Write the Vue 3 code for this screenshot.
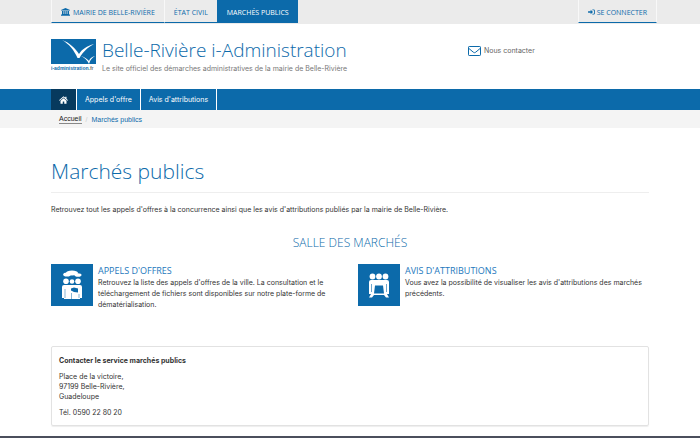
<script setup>
const services = [
  {
    title: "APPELS D'OFFRES",
    icon: 'offers',
    text: "Retrouvez la liste des appels d'offres de la ville. La consultation et le téléchargement de fichiers sont disponibles sur notre plate-forme de dématérialisation."
  },
  {
    title: "AVIS D'ATTRIBUTIONS",
    icon: 'awards',
    text: "Vous avez la possibilité de visualiser les avis d'attributions des marchés précédents."
  }
]
</script>

<template>
  <div class="page">
    <div class="topbar">
      <div class="container topbar-row">
        <nav class="tabs" aria-label="Sites">
          <a href="#" class="tab">
            <svg class="bank" viewBox="0 0 18 16" aria-hidden="true">
              <path d="M9 0 18 4v1H0V4zM2 6h3v6H2zM6.500 6h2v6h-2zM9.500 6h2v6h-2zM13 6h3v6h-3zM1 12h16v2H1zM0 14.500h18V16H0z" />
            </svg>
            MAIRIE DE BELLE-RIVIÈRE
          </a>
          <a href="#" class="tab">ÉTAT CIVIL</a>
          <a href="#" class="tab active" aria-current="page">MARCHÉS PUBLICS</a>
        </nav>
        <a href="#" class="tab login">
          <svg class="signin" viewBox="0 0 16 14" aria-hidden="true">
            <path d="M6 1.500 11.500 7 6 12.500V9H0V5h6zM10 1h3a3 3 0 0 1 3 3v6a3 3 0 0 1-3 3h-3v-2h3a1 1 0 0 0 1-1V4a1 1 0 0 0-1-1h-3z" />
          </svg>
          SE CONNECTER
        </a>
      </div>
    </div>

    <header class="container header">
      <a href="#" class="brand">
        <svg class="logo" viewBox="0 0 45 34" role="img" aria-label="i-administration.fr">
          <rect width="45" height="25" fill="#0c6aaa" />
          <path d="M11 1C19 4 24 9 28 15C31 10 36 7 43 5C36 9 32 13 28.500 19H26.500C23 11 18 5 11 1Z" fill="#fff" />
          <path d="M30 17C34 18 36 20 38 22C39 19 41 18 44 17C41 19 39 21 38 25C36 21 34 19 30 17Z" fill="#fff" />
          <text class="logo-text" x="0" y="31" fill="#0c6aaa">i-administration<tspan fill="#777">.fr</tspan></text>
        </svg>
        <span class="brand-text">
          <span class="site-name">Belle-Rivière i-Administration</span>
          <span class="slogan">Le site officiel des démarches administratives de la mairie de Belle-Rivière</span>
        </span>
      </a>
      <a href="#" class="contact">
        <svg class="mail" viewBox="0 0 13 10" aria-hidden="true">
          <rect x=".5" y=".5" width="12" height="9" rx=".7" />
          <path d="M.7 2.300 5.300 6.200Q6.500 7.200 7.700 6.200L12.300 2.300" />
        </svg>
        Nous contacter
      </a>
    </header>

    <nav class="mainnav" aria-label="Navigation principale">
      <div class="container nav-row">
        <a href="#" class="nav-item home" aria-label="Accueil">
          <svg class="house" viewBox="0 0 18 15" aria-hidden="true">
            <path d="M9 0 12.500 3V1H15v4.200L18 7.800 16.800 9 9 2.500 1.200 9 0 7.800zM9 4l6 5v6h-4.500v-4.500h-3V15H3V9z" />
          </svg>
        </a>
        <a href="#" class="nav-item">Appels d'offre</a>
        <a href="#" class="nav-item">Avis d'attributions</a>
      </div>
    </nav>

    <nav class="breadcrumb" aria-label="Fil d'Ariane">
      <div class="container crumbs">
        <a href="#" class="crumb-home">Accueil</a>
        <span class="slash">/</span>
        <span class="current">Marchés publics</span>
      </div>
    </nav>

    <main class="container main">
      <h1>Marchés publics</h1>
      <p class="intro">Retrouvez tout les appels d'offres à la concurrence ainsi que les avis d'attributions publiés par la mairie de Belle-Rivière.</p>
      <h2>SALLE DES MARCHÉS</h2>
      <div class="services">
        <article v-for="s in services" :key="s.icon" class="service">
          <svg v-if="s.icon === 'offers'" class="tile" viewBox="0 0 42 42" aria-hidden="true">
            <rect width="42" height="42" fill="#0c6aaa" />
            <g fill="#fff">
              <ellipse cx="21" cy="9" rx="6" ry="2.600" />
              <ellipse cx="16" cy="10.500" rx="3.800" ry="2" />
              <ellipse cx="27" cy="11" rx="3.500" ry="1.800" />
              <circle cx="15" cy="17.300" r="2.800" />
              <circle cx="21" cy="17.500" r="2.300" />
              <circle cx="27" cy="17.300" r="2.800" />
              <path d="M13 21h16q2 0 2 2v11h-2v1H13v-1h-2V23q0-2 2-2Z" />
            </g>
            <path d="m20 24.500 3-1 4 1v4l-4-.5-3-1.500z" fill="#0c6aaa" />
            <path d="M14 25v9M20.500 29v6M28 30v4" fill="none" stroke="#0c6aaa" stroke-width=".5" />
          </svg>
          <svg v-else class="tile" viewBox="0 0 42 42" aria-hidden="true">
            <rect width="42" height="42" fill="#0c6aaa" />
            <g fill="#fff">
              <circle cx="14.500" cy="12.500" r="2.900" />
              <circle cx="21" cy="12.500" r="2.900" />
              <circle cx="27.500" cy="12.500" r="2.900" />
              <path d="M13 16h16q2 0 2 2v12h-2l2 3.500h-3l-2-2.500H16l-2 2.500h-3l2-3.500h-2V18q0-2 2-2Z" />
            </g>
            <path d="M17 21.500h8l1 8H16z" fill="#0c6aaa" />
            <path d="M13.500 20v8M28.500 20v8" fill="none" stroke="#0c6aaa" stroke-width=".6" />
          </svg>
          <div class="service-body">
            <h3><a href="#">{{ s.title }}</a></h3>
            <p>{{ s.text }}</p>
          </div>
        </article>
      </div>

      <address class="card">
        <strong>Contacter le service marchés publics</strong>
        <p>Place de la victoire,<br />97199 Belle-Rivière,<br />Guadeloupe</p>
        <p>Tél. 0590 22 80 20</p>
      </address>
    </main>
    <footer class="footer"></footer>
  </div>
</template>

<style>
body {
  background: #fff;
}
</style>

<style scoped>
.page {
  font: 7px/11px Inter, "Liberation Sans", Arial, sans-serif;
  color: #333;
}
a {
  color: inherit;
  text-decoration: none;
}
h1, h2, h3, p {
  margin: 0;
}
svg {
  display: block;
  flex: none;
}
.container {
  box-sizing: border-box;
  max-width: 598px;
  margin: 0 auto;
}
.topbar {
  background: #ebebeb;
  padding-bottom: 1px;
}
.topbar-row {
  display: flex;
  justify-content: space-between;
}
.tabs {
  display: flex;
}
.tab {
  display: flex;
  align-items: center;
  gap: 3px;
  box-sizing: border-box;
  height: 23px;
  padding: 2px 9px 0;
  border-bottom: 1px solid #0c6aaa;
  border-left: 1px solid #f8f8f8;
  font: 7px/11px "Open Sans", sans-serif;
  color: #0c6aaa;
}
.tab.active {
  background: #0c6aaa;
  border-left-color: #0c6aaa;
  color: #fff;
}
.login {
  gap: 2px;
  margin-right: -8px;
  border-right: 1px solid #f8f8f8;
}
.bank {
  width: 9px;
  height: 8px;
  fill: #0c6aaa;
}
.signin {
  width: 7px;
  height: 6px;
  fill: #0c6aaa;
}
.header {
  display: grid;
  grid-template-columns: 417px 1fr;
  align-items: start;
  height: 65px;
  padding-top: 14px;
}
.brand {
  display: flex;
  gap: 6px;
  padding-top: 1px;
}
.logo {
  width: 45px;
  height: 34px;
}
.logo-text {
  font: bold 5px "Liberation Sans", sans-serif;
}
.brand-text {
  display: flex;
  flex-direction: column;
  gap: 2px;
}
.site-name {
  font: 300 19px/22px "Open Sans", sans-serif;
  color: #0c6aaa;
}
.slogan {
  color: #777;
}
.contact {
  display: flex;
  align-items: center;
  gap: 3px;
  padding-top: 7px;
  color: #666;
}
.mail {
  width: 13px;
  height: 10px;
  fill: none;
  stroke: #0c6aaa;
}
.mainnav {
  background: #0c6aaa;
}
.nav-row {
  display: flex;
}
.nav-item {
  display: flex;
  align-items: center;
  height: 21px;
  padding: 0 8px;
  border-right: 1px solid #fff;
  color: #fff;
}
.home {
  background: #073a5e;
}
.house {
  width: 9px;
  height: 8px;
  fill: #fff;
}
.breadcrumb {
  background: #f4f4f4;
  font-family: "Liberation Sans", Arial, sans-serif;
}
.crumbs {
  display: flex;
  align-items: center;
  gap: 4px;
  height: 18px;
  padding: 0 8px;
}
.crumb-home {
  line-height: 8px;
  color: #222;
  border-bottom: 1px solid #888;
}
.slash {
  color: #ccc;
}
.current {
  color: #0c6aaa;
}
.main {
  padding: 28px 0 10px;
}
h1 {
  padding-bottom: 6px;
  border-bottom: 1px solid #eee;
  font: 300 21px/30px "Open Sans", sans-serif;
  color: #0c6aaa;
}
.intro {
  margin-top: 11px;
}
h2 {
  margin-top: 20px;
  font: 300 12px/16px "Open Sans", sans-serif;
  text-align: center;
  color: #0c6aaa;
}
.services {
  display: grid;
  grid-template-columns: 1fr 1fr;
  gap: 16px;
  margin-top: 13px;
}
.service {
  display: flex;
  gap: 5px;
}
.tile {
  width: 42px;
  height: 42px;
}
h3 {
  font: 400 9px/13px "Open Sans", sans-serif;
  color: #2478bd;
}
.card {
  display: grid;
  gap: 6px;
  margin-top: 36px;
  padding: 9px 7px 7px;
  border: 1px solid #e2e2e2;
  border-radius: 2px;
  box-shadow: 0 1px 1px #eee;
  font-style: normal;
  line-height: 10px;
}
.footer {
  height: 2px;
  background: #4b4f5c;
}
</style>
